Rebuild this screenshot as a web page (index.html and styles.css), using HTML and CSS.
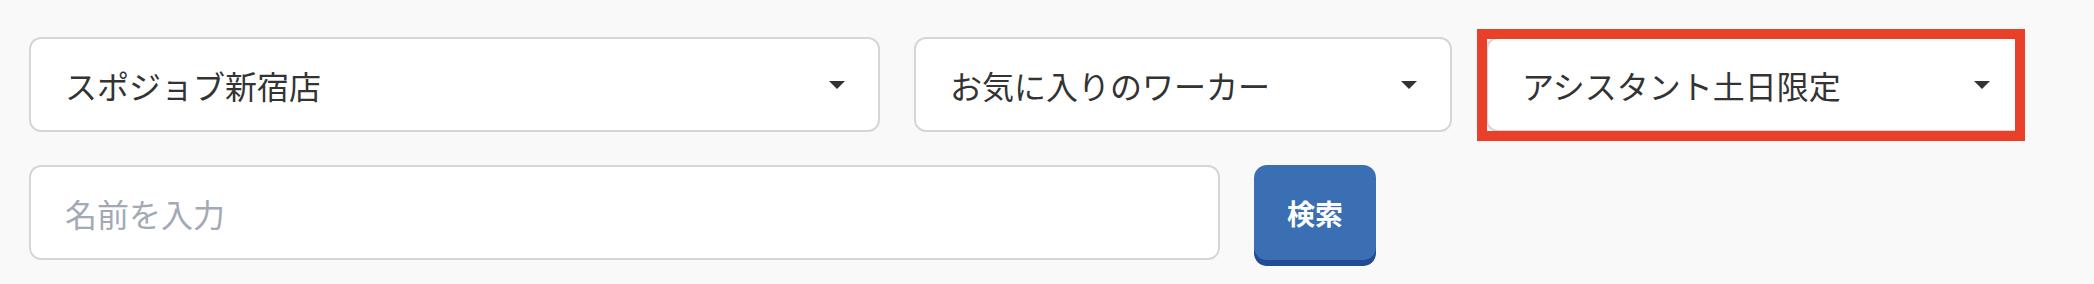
FILE: index.html
```html
<!DOCTYPE html>
<html lang="ja">
<head>
    <meta charset="UTF-8">
    <meta name="viewport" content="width=device-width, initial-scale=1.0">
    <title>ワーカー検索</title>
    <link rel="stylesheet" href="styles.css">
</head>
<body>
    <div class="search-form">
        <div class="row">
            <div class="select-box store">
                <span class="select-label">スポジョブ新宿店</span>
                <span class="caret"></span>
            </div>
            <div class="select-box worker">
                <span class="select-label">お気に入りのワーカー</span>
                <span class="caret"></span>
            </div>
            <div class="select-box group">
                <span class="select-label">アシスタント土日限定</span>
                <span class="caret"></span>
                <div class="highlight"></div>
            </div>
        </div>
        <div class="row">
            <input type="text" class="name-input" placeholder="名前を入力">
            <button class="btn-search">検索</button>
        </div>
    </div>
</body>
</html>
```

FILE: styles.css
```css
body {
    margin: 0;
    background-color: #f9f9f9;
    font-family: "Noto Sans CJK JP", "Noto Sans", sans-serif;
    color: #333;
}

.search-form {
    padding: 37px 0 0 29px;
}

.row {
    display: flex;
    gap: 34px;
    margin-bottom: 33px;
}

.select-box {
    position: relative;
    display: flex;
    align-items: center;
    justify-content: space-between;
    box-sizing: border-box;
    height: 95px;
    padding: 0 33px 0 34px;
    background-color: #fff;
    border: 2px solid #d6d6d6;
    border-radius: 12px;
    font-size: 32px;
}

.store {
    width: 851px;
}

.worker {
    width: 538px;
}

.group {
    width: 539px;
}

.caret {
    width: 0;
    height: 0;
    border-left: 8px solid transparent;
    border-right: 8px solid transparent;
    border-top: 8px solid #333;
}

.highlight {
    position: absolute;
    left: -11px;
    top: -10px;
    width: 548px;
    height: 112px;
    box-sizing: border-box;
    border: 10px solid #e9402a;
}

.name-input {
    box-sizing: border-box;
    width: 1191px;
    height: 95px;
    padding: 0 34px;
    background-color: #fff;
    border: 2px solid #d6d6d6;
    border-radius: 12px;
    font-family: inherit;
    font-size: 32px;
    color: #333;
    outline: none;
}

.name-input::placeholder {
    color: #a3a9b5;
}

.btn-search {
    width: 122px;
    height: 95px;
    background-color: #3a6fb4;
    border: none;
    border-radius: 13px;
    box-shadow: 0 6px 0 #214c93;
    color: #fff;
    font-family: inherit;
    font-size: 28px;
    font-weight: bold;
    cursor: pointer;
}
```
